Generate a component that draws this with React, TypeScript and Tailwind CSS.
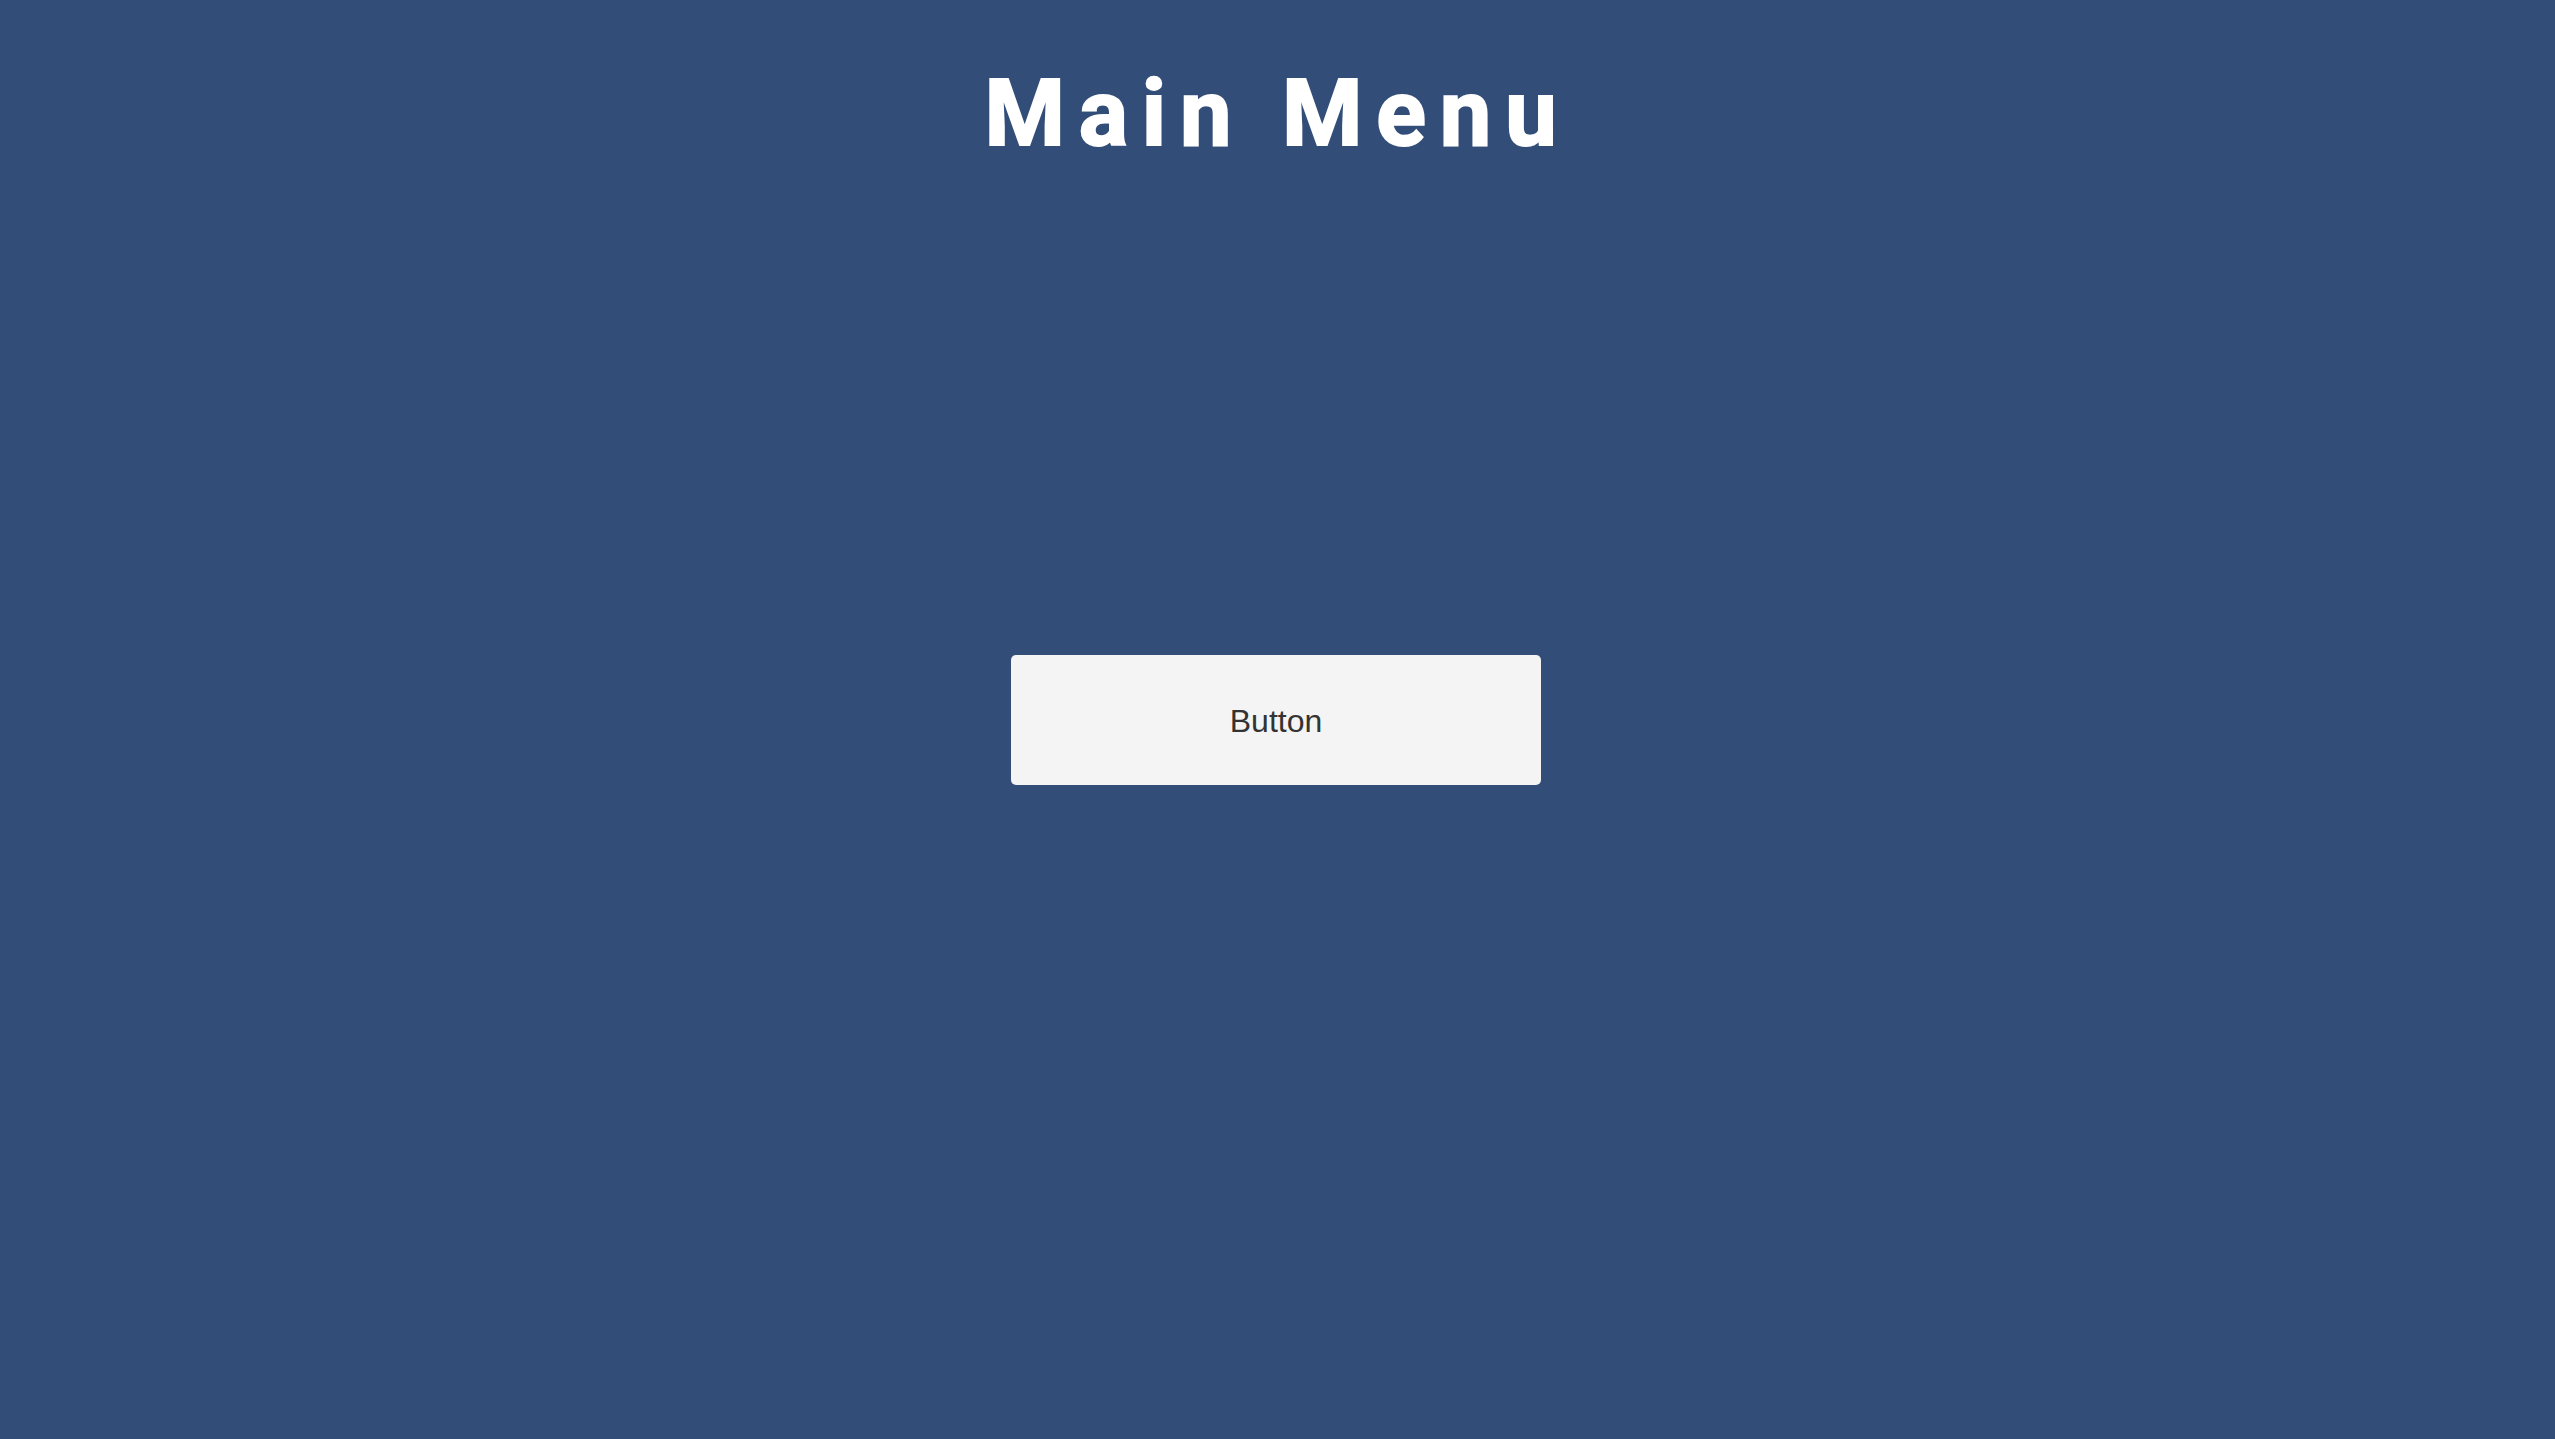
export default function App() {
  return (
    <div className="grid h-[1439px] w-full grid-rows-[1fr_auto_1fr] bg-[#314d78]">
      <div className="flex justify-center pt-[68px]">
        <h1 className="font-['Roboto',sans-serif] text-[92px] leading-none font-bold tracking-[0.15em] text-white [-webkit-text-stroke:2px_white]">
          Main Menu
        </h1>
      </div>

      <div className="flex justify-center">
        <button
          type="button"
          className="mr-[3px] flex h-[130px] w-[530px] items-center justify-center rounded-[5px] bg-[#f4f4f4] pt-[2px] font-['Liberation_Sans',sans-serif] text-[32px] text-[#333333]"
        >
          Button
        </button>
      </div>

      <div />
    </div>
  );
}
